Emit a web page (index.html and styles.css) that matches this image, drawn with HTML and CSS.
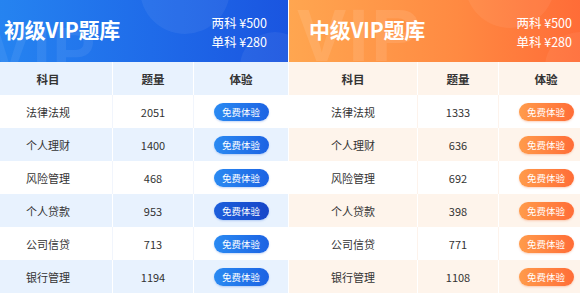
FILE: index.html
```html
<!DOCTYPE html>
<html lang="zh">
<head>
<meta charset="utf-8">
<link rel="stylesheet" href="styles.css">
</head>
<body>
<div class="wrap">
  <section class="panel blue">
    <header class="ph">
      <i class="wm"></i>
      <i class="c1"></i><i class="c2"></i>
      <h2 class="title">初级VIP题库</h2>
      <div class="price"><p>两科 ¥500</p><p>单科 ¥280</p></div>
    </header>
    <div class="tbl">
      <div class="row head"><span>科目</span><span>题量</span><span>体验</span></div>
      <div class="row"><span>法律法规</span><span>2051</span><span><a class="btn">免费体验</a></span></div>
      <div class="row alt"><span>个人理财</span><span>1400</span><span><a class="btn">免费体验</a></span></div>
      <div class="row"><span>风险管理</span><span>468</span><span><a class="btn">免费体验</a></span></div>
      <div class="row alt"><span>个人贷款</span><span>953</span><span><a class="btn hover">免费体验</a></span></div>
      <div class="row"><span>公司信贷</span><span>713</span><span><a class="btn">免费体验</a></span></div>
      <div class="row alt"><span>银行管理</span><span>1194</span><span><a class="btn">免费体验</a></span></div>
    </div>
  </section>
  <section class="panel orange">
    <header class="ph">
      <i class="wm"></i>
      <i class="c1"></i><i class="c2"></i>
      <h2 class="title">中级VIP题库</h2>
      <div class="price"><p>两科 ¥500</p><p>单科 ¥280</p></div>
    </header>
    <div class="tbl">
      <div class="row head"><span>科目</span><span>题量</span><span>体验</span></div>
      <div class="row"><span>法律法规</span><span>1333</span><span><a class="btn">免费体验</a></span></div>
      <div class="row alt"><span>个人理财</span><span>636</span><span><a class="btn">免费体验</a></span></div>
      <div class="row"><span>风险管理</span><span>692</span><span><a class="btn">免费体验</a></span></div>
      <div class="row alt"><span>个人贷款</span><span>398</span><span><a class="btn">免费体验</a></span></div>
      <div class="row"><span>公司信贷</span><span>771</span><span><a class="btn">免费体验</a></span></div>
      <div class="row alt"><span>银行管理</span><span>1108</span><span><a class="btn">免费体验</a></span></div>
    </div>
  </section>
</div>
</body>
</html>
```

FILE: styles.css
```css
* { box-sizing: border-box; }
html, body { margin: 0; padding: 0; background: #fff; overflow: hidden; }
body { font-family: "Noto Sans CJK SC", "Microsoft YaHei", sans-serif; color: #333; }
.wrap { display: flex; gap: 1px; margin-left: -16px; width: 620px; }
.panel { width: 304px; flex: none; }
.ph {
  position: relative; height: 62px; overflow: hidden;
  display: flex; align-items: center; justify-content: space-between;
  padding: 0 21px 0 20px; color: #fff;
}
.blue .ph { background: linear-gradient(90deg, #2686f1 0%, #1f6be9 55%, #1a55e0 100%); }
.orange .ph { background: linear-gradient(90deg, #ffa650 0%, #ff8a42 55%, #ff6936 100%); }
.wm { position: absolute; left: 4px; bottom: -26px; }
.wm::before {
  content: "VIP";
  font-family: "Liberation Sans", sans-serif; font-style: normal; font-weight: 700; font-size: 64px;
  color: rgba(255,255,255,0.07); letter-spacing: 2px;
}
.orange .wm { left: 8px; bottom: -16px; }
.orange .wm::before { font-size: 74px; color: rgba(255,255,255,0.1); }
.c1, .c2 { position: absolute; border-radius: 50%; background: rgba(255,255,255,0.06); }
.c1 { width: 90px; height: 90px; left: 156px; top: -56px; }
.c2 { width: 70px; height: 70px; right: -22px; bottom: -40px; }
.orange .c1 { left: 176px; top: -62px; }
.title { position: relative; margin: 0 0 5px; font-size: 21px; font-weight: 700; letter-spacing: -0.3px; }
.price { position: relative; margin-top: 2px; font-size: 12.5px; line-height: 19px; }
.price p { margin: 0; }
.tbl { font-size: 11px; }
.row {
  display: grid; grid-template-columns: 128px 81px 95px; height: 33px;
  background: #fff;
}
.row span { display: flex; align-items: center; justify-content: center; }
.row span + span { border-left: 1px solid #f1f5fc; }
.blue .row.head, .blue .row.alt { background: #e8f2fe; }
.orange .row.head, .orange .row.alt { background: #fef4eb; }
.orange .row span + span { border-left-color: #fdf3ec; }
.row.head span + span, .row.alt span + span { border-left-color: #fff; }
.row.head { font-weight: 700; font-size: 11.5px; }
.btn {
  display: inline-flex; align-items: center; justify-content: center;
  width: 55px; height: 18px; border-radius: 9px; color: #fff; font-size: 9.5px;
}
.blue .btn { background: linear-gradient(90deg, #2a8af2, #1c63e3); box-shadow: 0 1px 2px rgba(30,100,220,0.25); }
.blue .btn.hover { background: linear-gradient(90deg, #1d5fdc, #1746c8); }
.orange .btn { background: linear-gradient(90deg, #ff9b4b, #ff6d37); box-shadow: 0 1px 2px rgba(240,110,50,0.3); }
```
